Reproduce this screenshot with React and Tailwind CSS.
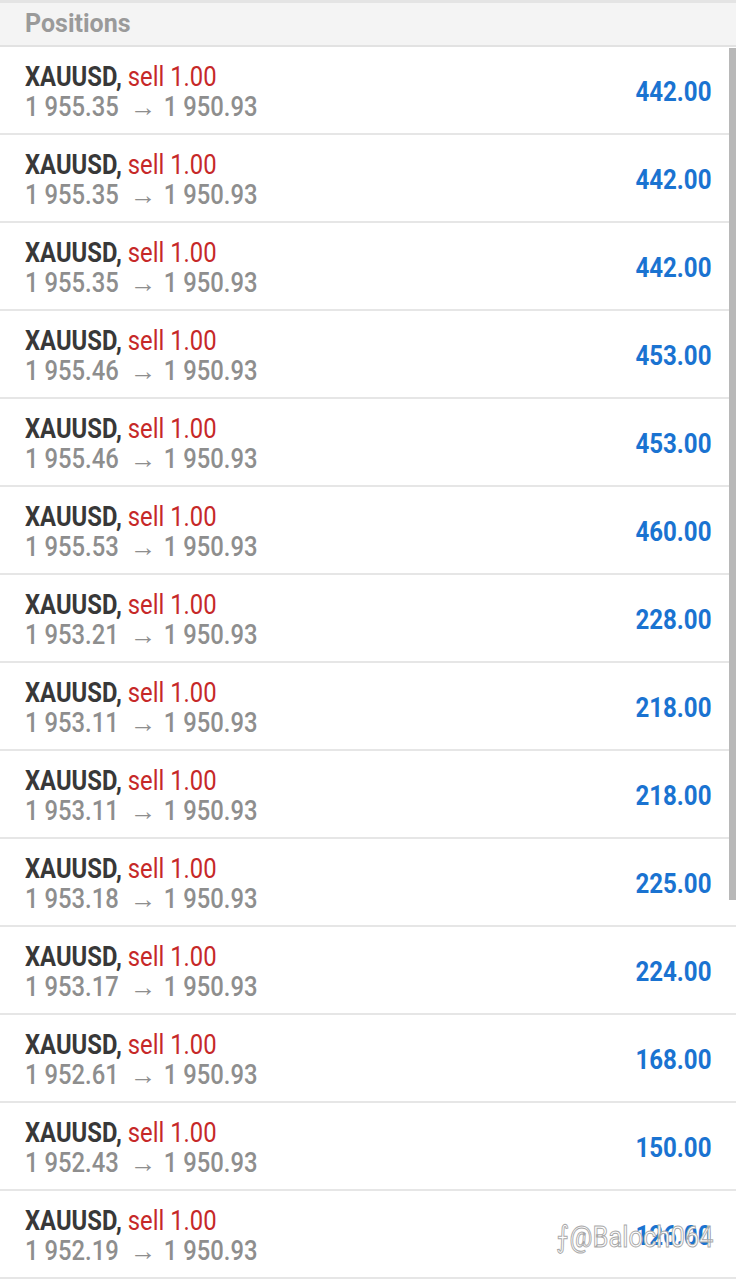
const rows = [
  ['1 955.35', '442.00'],
  ['1 955.35', '442.00'],
  ['1 955.35', '442.00'],
  ['1 955.46', '453.00'],
  ['1 955.46', '453.00'],
  ['1 955.53', '460.00'],
  ['1 953.21', '228.00'],
  ['1 953.11', '218.00'],
  ['1 953.11', '218.00'],
  ['1 953.18', '225.00'],
  ['1 953.17', '224.00'],
  ['1 952.61', '168.00'],
  ['1 952.43', '150.00'],
  ['1 952.19', '126.00'],
];

export default function App() {
  return (
    <div className="relative w-[736px] h-[1280px] overflow-hidden bg-white" style={{ fontFamily: 'Roboto, "Liberation Sans", sans-serif' }}>
      <div className="h-[3px] bg-[#e4e4e4]" />
      <div className="h-[44px] bg-[#f4f4f4] border-b-2 border-[#e2e2e2] flex items-center px-[25px]">
        <span className="inline-block text-[25px] font-bold text-[#9a9a9a] leading-none -mt-[1px]">Positions</span>
      </div>
      {rows.map(([open, profit], i) => (
        <div key={i} className="h-[88px] border-b-2 border-[#e6e6e6] flex items-center pl-[25px] pr-[25px] pt-[4px]">
          <div className="flex-1 flex flex-col">
            <div className="origin-left scale-x-[0.85] whitespace-nowrap text-[28px] leading-[30px]">
              <span className="font-bold text-[#383838]">XAUUSD, </span>
              <span className="text-[#c62828]">sell 1.00</span>
            </div>
            <div className="origin-left scale-x-[0.85] whitespace-nowrap text-[28px] leading-[30px] font-medium text-[#8e8e8e]">
              {open}<span className="inline-block text-[26px] scale-x-[1.2] ml-[16px] mr-[11px]">→</span>1 950.93
            </div>
          </div>
          <div className="origin-right scale-x-[0.86] whitespace-nowrap text-[28px] font-bold text-[#1a73d1]">{profit}</div>
        </div>
      ))}
      <div className="absolute right-0 top-[48px] w-[7px] h-[852px] bg-[#b8b8b8]" />
      <div className="absolute left-[556px] top-[1222px] text-[30px] leading-none text-white whitespace-nowrap origin-left scale-x-[0.85]" style={{ WebkitTextStroke: '1px #a8a8a8' }}>
        ⨍@Baloch064
      </div>
    </div>
  );
}
